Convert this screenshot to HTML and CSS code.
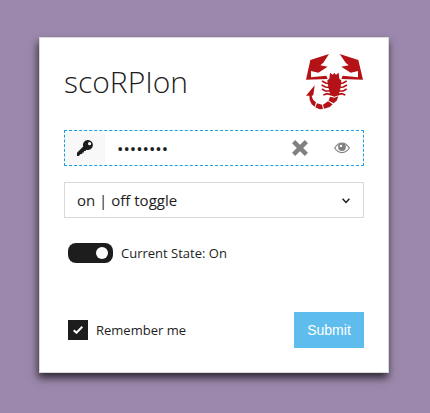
FILE: index.html
```html
<!DOCTYPE html>
<html lang="en">
<head>
    <meta charset="UTF-8">
    <meta name="viewport" content="width=device-width, initial-scale=1.0">
    <title>scoRPIon</title>
    <link rel="stylesheet" href="styles.css">
</head>
<body>
    <form class="login-form">
        <div class="header">
            <h1>scoRPIon</h1>
            <svg class="logo" viewBox="6 10 177 171" aria-hidden="true">
                <g fill="#b51218">
                    <path d="M78 13 L22 31 L9 90 L74 88 L70 78 L24 83 L24 64 L46 69 L74 51 L52 47 L61 39 Z"/>
                    <path d="M110 13 L166 31 L180 90 L115 88 L119 78 L165 83 L165 64 L143 69 L115 51 L137 47 L128 39 Z"/>
                    <path d="M81 69 L89 75 L94 70 L99 75 L107 69 L109 87 L115 92 L113 112 L107 137 L94 141 L82 137 L76 112 L73 92 L79 87 Z"/>
                    <path d="M81 141 L94 144 L106 140 L102 152 L92 161 L77 153 Z"/>
                    <path d="M75 155 L89 164 L80 172 L63 177 L60 165 Z"/>
                    <path d="M57 165 L60 178 L50 179 L37 173 L42 161 Z"/>
                    <path d="M35 107 L9 138 L19 138 L20 151 L26 164 L35 171 L39 158 L30 150 L26 138 L31 137 Z"/>
                </g>
                <g fill="none" stroke="#b51218" stroke-width="5">
                    <path d="M79 102 L68 100 L57 94 M79 113 L67 112 L56 106 M82 124 L67 124 L57 118 M84 135 L72 132 L61 136"/>
                    <path d="M109 102 L120 100 L131 94 M109 113 L121 112 L132 106 M106 124 L121 124 L131 118 M104 135 L116 132 L127 136"/>
                </g>
            </svg>
        </div>

        <div class="password-box">
            <label class="key" for="password" aria-label="Password">
                <svg width="16" height="16" viewBox="0 0 16 16">
                    <path fill="#1d1d1d" fill-rule="evenodd" d="M11 0 A5 5 0 1 1 9.5 9.8 L8.6 10.9 H7 V12.4 H5.3 V14 H3.6 L1.8 16 H0 V12.8 L6.2 6.6 A5 5 0 0 1 11 0 Z M12.6 2.1 A1.6 1.6 0 1 0 12.6 5.3 A1.6 1.6 0 1 0 12.6 2.1 Z"/>
                </svg>
            </label>
            <input type="password" id="password" value="scorpion">
            <button type="button" class="icon-button" aria-label="Clear">
                <svg width="16" height="16" viewBox="0 0 16 16">
                    <path stroke="#808080" stroke-width="4.4" d="M1.6 1.6 L14.4 14.4 M14.4 1.6 L1.6 14.4"/>
                </svg>
            </button>
            <button type="button" class="icon-button" aria-label="Show password">
                <svg width="16" height="12" viewBox="0 0 16 12">
                    <path fill="none" stroke="#808080" stroke-width="1.2" d="M0.7 6 Q3.8 1 8 1 Q12.2 1 15.3 6 Q12.2 10.6 8 10.6 Q3.8 10.6 0.7 6 Z"/>
                    <circle cx="8" cy="5" r="3.9" fill="#808080"/>
                    <circle cx="7" cy="3.9" r="1.2" fill="#fff"/>
                </svg>
            </button>
        </div>

        <div class="select-box">
            <select id="action" aria-label="Action">
                <option selected>on | off toggle</option>
            </select>
            <svg class="arrow" width="8" height="6" viewBox="0 0 8 6" aria-hidden="true">
                <path fill="none" stroke="#1d1d1d" stroke-width="1.5" d="M0.6 0.8 L4 4.4 L7.4 0.8"/>
            </svg>
        </div>

        <label class="option state">
            <input type="checkbox" class="switch" id="state" checked>
            <span>Current State: On</span>
        </label>

        <div class="footer">
            <label class="option">
                <span class="check-box">
                    <input type="checkbox" class="check" id="remember" checked>
                    <svg class="tick" width="10" height="8" viewBox="0 0 10 8" aria-hidden="true">
                        <path fill="none" stroke="#fff" stroke-width="2" d="M0.7 4.2 L3.5 6.7 L9.3 0.8"/>
                    </svg>
                </span>
                <span>Remember me</span>
            </label>
            <button type="submit" class="submit">Submit</button>
        </div>
    </form>
</body>
</html>
```

FILE: styles.css
```css
* {
    box-sizing: border-box;
}
body {
    margin: 0;
    padding: 37px 41px 39px 39px;
    background-color: #9c88ac;
    color: #1d1d1d;
    font-family: "Open Sans", "Noto Sans", sans-serif;
    font-size: 13px;
}
.login-form {
    padding: 15px 24px 24px;
    border: 1px solid #d9d9d9;
    background-color: #fff;
    box-shadow: -1px 5px 8px 0 rgba(0, 0, 0, 0.7);
}
.header {
    display: flex;
    justify-content: space-between;
    height: 77px;
}
h1 {
    margin: 8px 0 0;
    font-size: 30px;
    font-weight: 300;
    line-height: 42px;
}
.logo {
    width: 59px;
    height: 57px;
}
.password-box {
    display: flex;
    height: 36px;
    border: 1px dashed #1ba1e2;
}
.key {
    display: flex;
    justify-content: center;
    align-items: center;
    width: 40px;
    background-color: #f8f8f8;
}
.password-box input {
    flex: 1;
    min-width: 0;
    padding: 0 12px;
    border: none;
    outline: none;
    background: none;
    color: #1d1d1d;
    font-family: "Open Sans", sans-serif;
    font-size: 17px;
}
.icon-button {
    display: flex;
    justify-content: center;
    align-items: center;
    width: 42px;
    padding: 0;
    border: none;
    background: none;
    cursor: pointer;
}
.select-box {
    position: relative;
    margin-top: 16px;
}
select {
    display: block;
    width: 100%;
    height: 36px;
    padding: 0 12px;
    border: 1px solid #d9d9d9;
    border-radius: 0;
    background-color: #fff;
    color: #1d1d1d;
    font-family: "Open Sans", sans-serif;
    font-size: 15px;
    appearance: none;
}
.arrow {
    position: absolute;
    top: 16px;
    right: 14px;
    pointer-events: none;
}
.option {
    display: flex;
    align-items: center;
    gap: 8px;
    padding-left: 4px;
    line-height: 20px;
}
.state {
    margin-top: 25px;
}
.switch {
    display: flex;
    align-items: center;
    justify-content: flex-end;
    width: 45px;
    height: 20px;
    margin: 0;
    padding: 0 5px;
    border-radius: 8px;
    background-color: #1d1d1d;
    appearance: none;
}
.switch::before {
    content: "";
    width: 12px;
    height: 12px;
    border-radius: 50%;
    background-color: #fff;
}
.switch:not(:checked) {
    justify-content: flex-start;
}
.check-box {
    display: grid;
    place-items: center;
}
.check,
.tick {
    grid-area: 1 / 1;
}
.check {
    width: 20px;
    height: 20px;
    margin: 0;
    background-color: #1d1d1d;
    appearance: none;
}
.tick {
    position: relative;
    pointer-events: none;
}
.check:not(:checked) + .tick {
    display: none;
}
.footer {
    display: flex;
    justify-content: space-between;
    align-items: center;
    margin-top: 49px;
}
.submit {
    width: 70px;
    height: 36px;
    padding: 0;
    border: none;
    background-color: #5fbdee;
    color: #fff;
    font-family: "Liberation Sans", Arial, sans-serif;
    font-size: 14px;
    cursor: pointer;
}
```
